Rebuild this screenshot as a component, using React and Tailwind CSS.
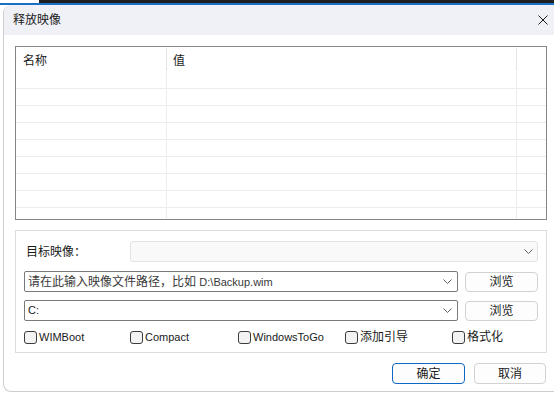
const Chevron = ({ className }) => (
  <svg width="9" height="5" viewBox="0 0 9 5" className={className}>
    <path d="M0.5 0.5 L4.5 4.5 L8.5 0.5" fill="none" stroke="#5f5f5f" strokeWidth="1" />
  </svg>
);

const Check = ({ label, w, latin }) => (
  <div className={`flex items-center ${w}`}>
    <span className="w-[13px] h-[13px] rounded-[3px] border border-[#3c3c3c] bg-[#f3f3f3] shrink-0" />
    <span className={`ml-[2px] text-[#1a1a1a] leading-none ${latin ? "text-[11px]" : "text-[12px]"}`}>{label}</span>
  </div>
);

const Row = ({ filler }) => (
  <div className={`grid grid-cols-[151px_350px_1fr] ${filler ? "flex-1" : "h-[17px] border-b border-[#ececec]"}`}>
    <div className="border-r border-[#ececec]" />
    <div className="border-r border-[#ececec]" />
    <div />
  </div>
);

export default function App() {
  const rows = [0, 1, 2, 3, 4, 5, 6, 7];
  return (
    <div
      className="w-[554px] h-[394px] overflow-hidden bg-white text-[#1a1a1a]"
      style={{ fontFamily: '"Liberation Sans", "Noto Sans CJK SC", sans-serif' }}
    >
      <div className="flex h-[3px]">
        <div className="w-[39px] bg-white" />
        <div className="flex-1 bg-[#202020]" />
      </div>
      <div className="h-[2px] bg-[#1b70c6]" />

      <div className="ml-[3px] h-[387px] border-l border-b border-[#cdcdcd] rounded-tl-[8px] rounded-bl-[8px] overflow-hidden flex flex-col">
        {/* title bar */}
        <div className="h-[30px] shrink-0 bg-[#eff1f7] flex items-center justify-between pl-[9px] pr-[6px]">
          <span className="text-[12px] leading-none">释放映像</span>
          <svg width="10" height="10" viewBox="0 0 10 10">
            <path d="M0.5 0.5 L9.5 9.5 M9.5 0.5 L0.5 9.5" stroke="#1a1a1a" strokeWidth="1" />
          </svg>
        </div>

        {/* list view */}
        <div className="ml-[11px] mt-[11px] w-[532px] h-[174px] border border-[#868686] flex flex-col">
          <div className="h-[25px] grid grid-cols-[151px_350px_1fr] shrink-0">
            <div className="flex items-center pl-[7px] pt-[3px] text-[12px] relative">
              名称
              <span className="absolute right-0 top-[1px] bottom-[1px] w-px bg-[#e3e3e3]" />
            </div>
            <div className="flex items-center pl-[6px] pt-[3px] text-[12px] relative">
              值
              <span className="absolute right-0 top-[1px] bottom-[1px] w-px bg-[#e3e3e3]" />
            </div>
            <div />
          </div>
          {rows.map(r => (
            <Row key={r} />
          ))}
          <Row filler />
        </div>

        {/* options group */}
        <div className="ml-[11px] mt-[10px] w-[532px] h-[123px] border border-[#dcdcdc] px-[8px] flex flex-col">
          <div className="mt-[10px] h-[21px] flex items-center">
            <span className="w-[106px] pl-[2px] text-[12px] leading-none">目标映像：</span>
            <div className="flex-1 h-[21px] rounded-[3px] border border-[#e3e3e3] bg-[#f9f9f9] flex items-center justify-end pr-[4px]">
              <Chevron />
            </div>
          </div>

          <div className="mt-[9px] h-[21px] flex items-center">
            <div className="w-[435px] h-[21px] rounded-[2px] border border-[#7a7a7a] flex items-center justify-between pl-[3px] pr-[5px]">
              <span className="text-[12px] text-[#3a3a3a] leading-none whitespace-nowrap">
                请在此输入映像文件路径，比如 <span className="text-[11px]">D:\Backup.wim</span>
              </span>
              <Chevron />
            </div>
            <button className="ml-[7px] w-[73px] h-[20px] rounded-[4px] border border-[#d2d2d2] bg-[#fdfdfd] text-[12px] leading-none">
              浏览
            </button>
          </div>

          <div className="mt-[8px] h-[21px] flex items-center">
            <div className="w-[435px] h-[21px] rounded-[2px] border border-[#7a7a7a] flex items-center justify-between pl-[3px] pr-[5px]">
              <span className="text-[11px] leading-none">C:</span>
              <Chevron />
            </div>
            <button className="ml-[7px] w-[73px] h-[20px] rounded-[4px] border border-[#d2d2d2] bg-[#fdfdfd] text-[12px] leading-none">
              浏览
            </button>
          </div>

          <div className="mt-[8px] h-[16px] flex items-center">
            <Check label="WIMBoot" w="w-[106px]" latin />
            <Check label="Compact" w="w-[108px]" latin />
            <Check label="WindowsToGo" w="w-[107px]" latin />
            <Check label="添加引导" w="w-[107px]" />
            <Check label="格式化" w="w-[80px]" />
          </div>
        </div>

        {/* buttons */}
        <div className="mt-[10px] pr-[8px] flex justify-end gap-[9px]">
          <button className="w-[73px] h-[21px] rounded-[4px] border border-[#1167c4] bg-[#fdfdfd] text-[12px] leading-none">
            确定
          </button>
          <button className="w-[72px] h-[21px] rounded-[4px] border border-[#d2d2d2] bg-[#fdfdfd] text-[12px] leading-none">
            取消
          </button>
        </div>
      </div>
    </div>
  );
}
